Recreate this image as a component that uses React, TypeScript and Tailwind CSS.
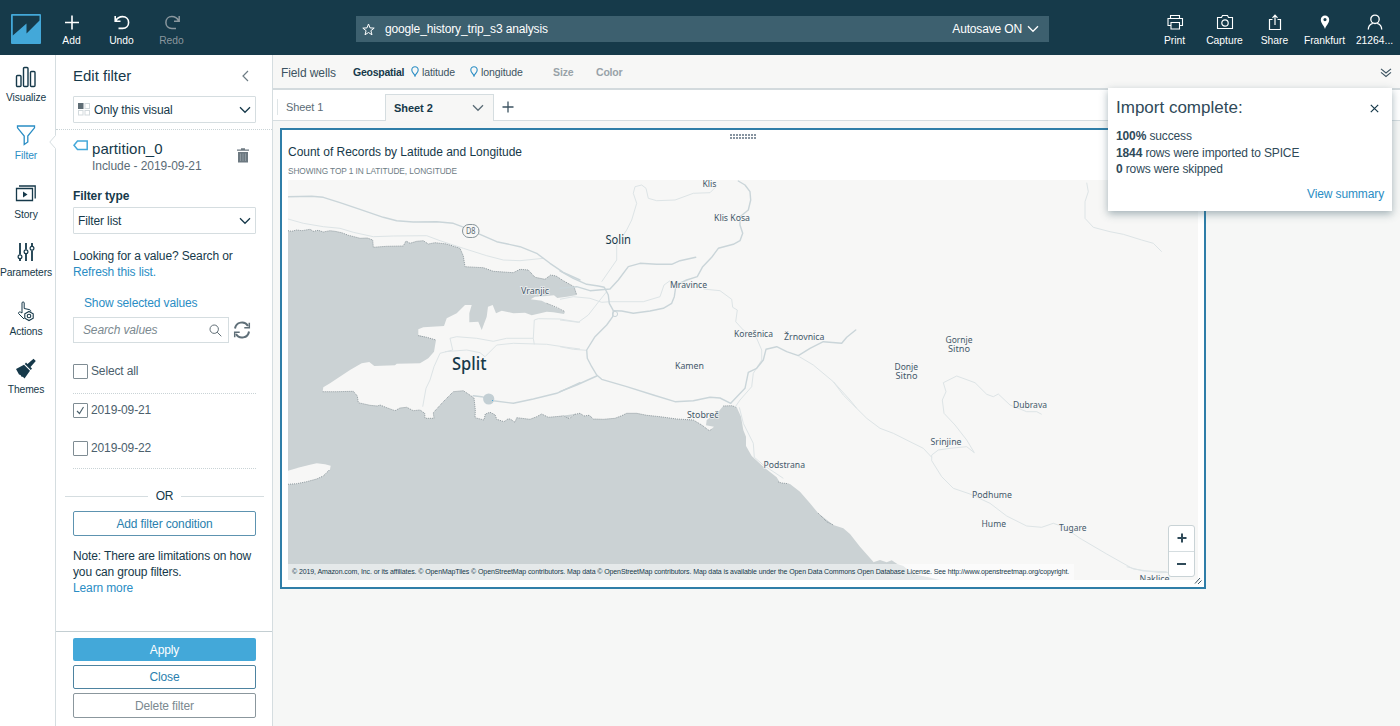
import React from "react";

type Origin = [number, number];

function trace(origin: Origin, coords: string): string {
  return coords
    .trim()
    .split(/\s+/)
    .map((p) => {
      const [x, y] = p.split(",").map(Number);
      return `${(origin[0] + x / 3).toFixed(1)},${(origin[1] + y / 3).toFixed(1)}`;
    })
    .join(" ");
}

const NW: Origin = [280, 170];
const N: Origin = [560, 170];
const NE: Origin = [840, 170];
const SW: Origin = [280, 370];
const S: Origin = [560, 370];
const SE: Origin = [860, 370];

const northShore = trace(
  NW,
  "24,182 35,184 50,180 66,182 90,178 100,184 115,181 130,186 150,182 165,184 185,188 205,196 222,200 240,205 262,204 278,210 280,232 320,229 370,228 378,213 390,220 410,214 430,212 445,222 465,218 500,222 540,235 550,258 555,290 610,293 640,304 700,308 720,298 745,300 765,322 795,328 812,315 828,318 850,332 882,350 890,375",
);
const innerBay = trace(
  NW,
  "860,380 832,384 822,376 800,378 765,380 752,388 785,392 800,400 855,425 852,432 820,427 800,425 755,436 735,428 700,430 665,422 648,430 638,405 624,410 620,440 605,480 595,455 568,457 568,430 575,405 555,405 530,430 500,445 492,468 430,472 415,478 415,495 440,502 468,510 462,545 445,565 420,580 350,581 345,586 283,588 268,576 245,580 210,600 150,640 130,652 128,663",
);
const peninsula = trace(
  SW,
  "128,65 170,65 220,64 232,78 235,98 270,106 292,108 300,105 320,113 345,122 360,114 380,112 400,122 420,120 434,130 435,145 462,145 460,128 490,95 520,65 550,62 565,72 582,84 586,120 585,143 612,150 616,132 630,127 645,134 650,148 672,155 685,146 692,148 705,157 710,143 750,148 770,140 785,132 805,142 850,138 868,146 885,132",
);
const southShore = trace(
  S,
  "0,138 12,140 25,145 40,135 60,130 72,138 88,136 100,147 130,148 165,145 185,137 200,130 230,130 260,136 300,140 350,147 400,150 425,165 448,182 462,170 438,166 440,150 475,125 490,108 515,107 530,112 543,140 550,180 558,200 558,228 575,258 610,290 650,322 660,338 690,342 720,365 750,400 775,430 820,465 850,475 870,492 900,530 940,575",
);
const southEast = trace(SE, "40,577 60,570 80,577 95,571 112,582 130,588 160,612 205,622 240,630");

const island = trace(SW, "20,303 60,292 90,284 110,280 135,283 152,287 150,298 130,318 110,327 80,335 50,341 20,343");

const mainRoads = [
  trace(NW, "24,80 95,79 130,82 180,98 240,118 310,142 350,152 400,156 470,155 520,160 560,175 600,193 650,215 720,230 770,250 810,280 850,307 900,330"),
  trace(N, "0,303 40,325 80,343 115,348 133,352 145,375 148,400 160,422 158,440 140,465 105,500 80,540 82,565 95,590 110,615 125,628 200,650 280,675 345,695 400,692 450,682 480,684 512,700"),
  trace(N, "535,33 555,45 570,65 572,90 565,120 540,140 540,165 548,190 540,212 520,223 475,235 455,262 428,290 412,320 380,330 348,345 343,380 335,400 310,415 270,423 220,430 185,423 160,422"),
  trace(N, "0,355 50,350 90,362 150,357 175,330 205,290 240,280 290,283 335,283 360,272 407,262"),
  trace(N, "512,700 555,655 565,607 590,595 610,570 618,538 650,530 680,545 715,557 750,535 790,515 845,520 860,502 887,480"),
  trace(N, "0,665 50,645 110,618"),
  trace(NW, "580,677 605,680 640,692 700,700 760,687 830,670 900,638"),
];

const minorRoads = [
  trace(NW, "24,147 70,160 130,170 180,175 220,187 280,200 340,198 440,197 480,212 550,235 620,257 670,270 720,272 790,265"),
  trace(NW, "510,505 530,500 590,505 640,514 680,505 760,505 763,450 775,446 840,447 900,457"),
  trace(NW, "510,505 518,540 480,550 462,590 450,630 438,655 428,710"),
  trace(NW, "495,545 560,540 600,548 615,560 650,525 700,520 800,523 860,532 900,537"),
  trace(NW, "760,505 763,523"),
  trace(N, "0,530 40,538 80,541"),
  trace(N, "150,395 250,395 300,380 312,345 330,332"),
  trace(N, "0,450 55,457 85,435 120,390 140,365"),
  trace(N, "0,388 40,380 90,385 125,397 150,395"),
  trace(N, "125,335 170,270 170,225 200,180 215,150 230,100 220,70 225,50 245,45 258,55 265,85 290,92 345,90 400,70 450,68 468,50"),
  trace(N, "430,357 480,362 515,388 518,412 532,420 527,455 550,480 590,505 605,540 605,570 580,610 575,650 540,690 525,712"),
  trace(N, "718,560 760,585 820,635 870,690 890,715"),
  trace(S, "820,35 850,75 920,145 960,175 1000,190 1050,215 1090,235 1115,262"),
  trace(NE, "740,38 745,65 735,95 735,145 760,172 810,185 850,193 905,210 940,220 965,245"),
  trace(SE, "380,73 345,38 290,18 250,38 258,65 247,90 252,130 285,165 320,210 343,248 320,230 270,235 235,240 215,255 215,272 245,320 280,355 330,372 390,400 440,438 500,468 545,472 580,460 610,470 660,505 740,552 820,597 900,608 980,605"),
  trace(SE, "380,73 400,80 415,72 450,105 500,125 530,125 545,133"),
  trace(SE, "800,590 850,603 920,605"),
  trace(S, "538,112 550,160 580,220 583,262 610,285 670,325"),
];

interface PlaceLabel {
  text: string;
  x: number;
  y: number;
  w: number;
  size?: number;
  weight?: number;
  fill?: string;
}

const places: PlaceLabel[] = [
  { text: "Klis", x: 702.5, y: 187, w: 14 },
  { text: "Klis Kosa", x: 714, y: 221, w: 36 },
  { text: "Solin", x: 605.5, y: 243.5, w: 25.5, size: 12, fill: "#16394a" },
  { text: "Mravince", x: 670, y: 287.5, w: 37 },
  { text: "Vranjic", x: 521, y: 294, w: 28 },
  { text: "Korešnica", x: 734, y: 336.5, w: 39 },
  { text: "Žrnovnica", x: 784, y: 340, w: 40.5 },
  { text: "Kamen", x: 675, y: 368.5, w: 29 },
  { text: "Split", x: 452, y: 370, w: 34.5, size: 18, weight: 500, fill: "#16394a" },
  { text: "Gornje", x: 945.5, y: 342.7, w: 27 },
  { text: "Sitno", x: 948, y: 352, w: 22 },
  { text: "Donje", x: 894.5, y: 369.7, w: 23.5 },
  { text: "Sitno", x: 895.5, y: 379, w: 22 },
  { text: "Dubrava", x: 1013, y: 407.5, w: 34 },
  { text: "Stobreč", x: 687, y: 417.5, w: 31.5 },
  { text: "Srinjine", x: 930.5, y: 445, w: 31 },
  { text: "Podstrana", x: 763.5, y: 468, w: 41.5 },
  { text: "Podhume", x: 972, y: 497.5, w: 40 },
  { text: "Hume", x: 981.5, y: 526.5, w: 24.5 },
  { text: "Tugare", x: 1059, y: 530.5, w: 27.5 },
  { text: "Naklice", x: 1139.5, y: 582, w: 30 },
];

function MapView() {
  return (
    <svg className="block h-[400px] w-[910px]" viewBox="288 180 910 400">
      <rect x="288" y="180" width="910" height="400" fill="#f7f7f6" />
      <polygon points={`${northShore} ${innerBay} ${peninsula} ${southShore} ${southEast} 288,580`} fill="#cbd2d4" />
      <polygon points={island} fill="#f7f7f6" />
      <g fill="none" stroke="#8e999e" strokeWidth="1" strokeDasharray="1 1">
        <polyline points={northShore} />
        <polyline points={peninsula} />
        <polyline points={trace(S, "45,133 60,130 72,138 88,136 100,147 130,148 165,145 185,137 200,130 230,130 260,136 300,140 350,147 400,150 425,165 448,182 455,178")} />
        <polyline points={trace(S, "490,108 515,107 530,112")} />
        <polyline points={trace(S, "775,430 800,455 820,465")} />
        <polyline points={trace(S, "655,336 665,339 685,341")} />
        <polyline points={trace(SW, "24,343 50,341 80,335 110,327 130,318 150,298")} />
        <polyline points={trace(NW, "415,497 440,502 468,510")} />
        <polyline points={trace(NW, "800,400 830,412 855,425")} />
      </g>
      <g fill="none" stroke="#dde4e6" strokeWidth="1" strokeLinejoin="round">
        {minorRoads.map((p, i) => (
          <polyline key={i} points={p} />
        ))}
      </g>
      <g fill="none" stroke="#cad5d9" strokeWidth="1.4" strokeLinejoin="round" strokeLinecap="round">
        {mainRoads.map((p, i) => (
          <polyline key={i} points={p} />
        ))}
      </g>
      <circle cx="615" cy="314" r="2.6" fill="none" stroke="#cad5d9" />
      <circle cx="488.7" cy="399" r="5.6" fill="#c3cfd4" />
      <rect x="492" y="400" width="1" height="1" fill="#43a8d9" />
      <rect x="462.5" y="224.5" width="16.5" height="13" rx="6.5" fill="#f7f7f6" stroke="#87949a" />
      <text x="466" y="234" fontSize="8.5" fontFamily="'Noto Sans', sans-serif" fill="#5b6a72" textLength="9.5" lengthAdjust="spacingAndGlyphs">
        D8
      </text>
      {places.map((p) => (
        <text
          key={`${p.text}${p.x}`}
          x={p.x}
          y={p.y}
          fontSize={p.size ?? 9}
          fontWeight={p.weight ?? 400}
          fontFamily="'Noto Sans', sans-serif"
          fill={p.fill ?? "#44596a"}
          stroke="#f7f7f6"
          strokeWidth="1.6"
          strokeOpacity="0.8"
          paintOrder="stroke"
          textLength={p.w}
          lengthAdjust="spacingAndGlyphs"
        >
          {p.text}
        </text>
      ))}
    </svg>
  );
}

function Glyph({ children, size = 20, sw = 1.4, className = "" }: { children: React.ReactNode; size?: number; sw?: number; className?: string }) {
  return (
    <svg
      width={size}
      height={size}
      viewBox={`0 0 ${size} ${size}`}
      fill="none"
      stroke="currentColor"
      strokeWidth={sw}
      className={`shrink-0 ${className}`}
    >
      {children}
    </svg>
  );
}

function Chevron({ className = "" }: { className?: string }) {
  return (
    <svg width="12" height="8" viewBox="0 0 12 8" fill="none" stroke="currentColor" strokeWidth="1.3" className={className}>
      <path d="M1 1.3L6 6.3L11 1.3" />
    </svg>
  );
}

function TopAction({ label, dim, children }: { label: string; dim?: boolean; children: React.ReactNode }) {
  return (
    <div className={`flex w-[50px] flex-col items-center pt-3 ${dim ? "text-[#8a979e]" : "text-white"}`}>
      <Glyph>{children}</Glyph>
      <span className="mt-px text-[10.3px] leading-4 whitespace-nowrap">{label}</span>
    </div>
  );
}

function TopBar() {
  return (
    <header className="flex h-[55px] shrink-0 bg-[#163a4a]">
      <div className="flex w-[46.500px] pt-3.5 pl-[11px]">
        <svg width="30" height="30" viewBox="0 0 30 30">
          <rect width="30" height="30" rx="1" fill="#43a8d9" />
          <path d="M1.8 1.8H28.5V6.5L15.500 19.500V9.500L1.8 21.5Z" fill="#163a4a" />
        </svg>
      </div>
      <TopAction label="Add">
        <path d="M10 3.5V17.5M3 10.5H17" strokeWidth="1.6" />
      </TopAction>
      <TopAction label="Undo">
        <path d="M3.200 4V9.200H8.500M3.800 8.800C5.400 5.600 7.800 4.600 10.600 4.600C14.200 4.600 16.600 7 16.600 10.500C16.600 14 14.200 16.400 10.600 16.400H6.500" strokeWidth="1.6" />
      </TopAction>
      <TopAction label="Redo" dim>
        <path d="M17.200 4V9.200H12M16.700 8.800C15 5.600 12.600 4.600 9.800 4.600C6.300 4.600 3.900 7 3.900 10.500C3.900 14 6.300 16.400 9.800 16.400H14" strokeWidth="1.5" />
      </TopAction>
      <div className="mt-4 ml-[159.500px] flex h-[26px] w-[693px] items-center bg-[#3d606f] px-[6px] text-white">
        <svg width="13" height="13" viewBox="0 0 13 13" fill="none" stroke="currentColor" strokeWidth="1">
          <path d="M6.500 1L8 4.900L12.200 5.100L8.900 7.700L10 11.800L6.500 9.500L3 11.800L4.100 7.700L.8 5.100L5 4.900Z" />
        </svg>
        <span className="ml-[10px] text-[12px] tracking-[-0.150px]">google_history_trip_s3 analysis</span>
        <span className="ml-auto text-[12px] tracking-[-0.150px]">Autosave ON</span>
        <Chevron className="mr-1 ml-[5px]" />
      </div>
      <div className="mr-[0.500px] ml-auto flex">
        <TopAction label="Print">
          <path d="M5.500 6.500V3.500H14.500V6.500M5.500 13.500H3V6.500H17.500V13.500H14.500M6 10.500H14.500V17H6Z" strokeWidth="1.1" />
        </TopAction>
        <TopAction label="Capture">
          <path d="M2.500 5.500H6.500L7.500 3.500H12.500L13.500 5.500H17.500V16.500H2.500Z" strokeWidth="1.1" />
          <circle cx="10" cy="11" r="3.200" strokeWidth="1.200" />
        </TopAction>
        <TopAction label="Share">
          <path d="M7.500 7.500H4.500V17.500H15.500V7.500H12.500M10 13V3.500M7.500 5.800L10 3.200L12.500 5.800" strokeWidth="1.200" />
        </TopAction>
        <TopAction label="Frankfurt">
          <path d="M10 17C9 13.500 5.800 11.500 5.800 7.800A4.200 4.200 0 0 1 14.200 7.800C14.200 11.500 11 13.500 10 17ZM10 6A1.600 1.600 0 1 0 10 9.200A1.600 1.600 0 1 0 10 6Z" fill="currentColor" stroke="none" fillRule="evenodd" />
        </TopAction>
        <TopAction label="21264...">
          <circle cx="10" cy="7.300" r="4.200" strokeWidth="1.300" />
          <path d="M3.300 17.500C3.300 14 5.500 12 7.800 11.300M12.200 11.300C14.500 12 16.700 14 16.700 17.500" strokeWidth="1.300" />
        </TopAction>
      </div>
    </header>
  );
}

function NavItem({ label, active, children }: { label: string; active?: boolean; children: React.ReactNode }) {
  return (
    <div className={`flex h-[58.4px] w-[52px] flex-col items-center ${active ? "text-[#2a8dc4]" : "text-[#16394a]"}`}>
      <div className="mt-[11px] flex h-[22px] items-center">
        <Glyph size={22}>{children}</Glyph>
      </div>
      <span className="mt-[2px] text-[10.300px] leading-4 tracking-[-0.100px] whitespace-nowrap">{label}</span>
    </div>
  );
}

function SideNav() {
  return (
    <nav className="relative w-14 shrink-0 border-r border-[#d5dde0]">
      <NavItem label="Visualize">
        <rect x="1.500" y="9.500" width="4.500" height="11" rx="1" />
        <rect x="8.500" y="1.500" width="4.500" height="19" rx="1" />
        <rect x="15.500" y="5.500" width="4.500" height="15" rx="1" />
      </NavItem>
      <NavItem label="Filter" active>
        <path d="M2.500 2H19.500V3.800L12.800 12V18L9.200 20.500V12L2.500 3.800Z" strokeWidth="1.300" />
      </NavItem>
      <NavItem label="Story">
        <path d="M1.500 5.500H17.500V17.500H1.500ZM4 3H20.200V15.500" strokeWidth="1.300" />
        <path d="M8 8.500V14.500L12.500 11.500Z" fill="currentColor" stroke="none" />
      </NavItem>
      <NavItem label="Parameters">
        <path d="M5 2V13.500M5 18V20M11 2V8.500M11 13V20M17 2V5M17 9.500V20" strokeWidth="1.800" />
        <circle cx="5" cy="15.700" r="1.900" strokeWidth="1.200" />
        <circle cx="11" cy="10.700" r="1.900" strokeWidth="1.200" />
        <circle cx="17" cy="7.200" r="1.900" strokeWidth="1.200" />
      </NavItem>
      <NavItem label="Actions">
        <path d="M9 19L3.500 13.500C3.500 11.500 5 11.500 7 13V3C7 1.500 9.200 1.500 9.200 3V8.500L14 9.500C15.500 10 15.800 10.500 15.800 11.500" strokeWidth="1" />
        <path d="M14 11.500L18.200 13.800V18.200L14 20.500L9.800 18.200V13.800Z" strokeWidth="1.100" />
        <circle cx="14" cy="16" r="1.800" strokeWidth="1.100" />
      </NavItem>
      <NavItem label="Themes">
        <path d="M12.500 6L18.500 .8L20.800 3L15.500 9L17 10.500L15.800 12L9.800 6L11 4.600Z" fill="currentColor" stroke="none" />
        <path d="M9 6.800L15 12.800L9.500 20.500L7.800 18.800L6.800 19L5.500 17L4 16.500L1 11Z" fill="currentColor" stroke="none" />
      </NavItem>
      <svg className="absolute top-[79px] left-[49px]" width="8" height="16" viewBox="0 0 8 16">
        <path d="M8 0V16L6.500 14.500L.8 8L6.500 1.500Z" fill="#fff" />
        <path d="M6.500 1.500L.8 8L6.500 14.500" fill="none" stroke="#d5dde0" />
      </svg>
    </nav>
  );
}

function SelectBox({ children }: { children: React.ReactNode }) {
  return (
    <div className="flex h-[27px] items-center rounded-[1px] border border-[#d5dde0] pr-1 pl-[4px]">
      {children}
      <Chevron className="ml-auto" />
    </div>
  );
}

function CheckRow({ label, checked }: { label: string; checked?: boolean }) {
  return (
    <div className="flex h-4 items-center text-[#4b606c]">
      <span className="flex size-[15px] items-center justify-center rounded-[1px] border border-[#7f8c93]">
        {checked && (
          <svg width="9" height="9" viewBox="0 0 9 9" fill="none" stroke="currentColor" strokeWidth="1.100">
            <path d="M1 5L3.500 7.500L7.500 1" />
          </svg>
        )}
      </span>
      <span className="ml-[3px]">{label}</span>
    </div>
  );
}

function FilterPanel() {
  return (
    <aside className="flex w-[217px] shrink-0 flex-col border-r border-[#d5dde0] text-[12px] tracking-[-0.130px] text-[#16394a]">
      <div className="border-b border-dotted border-[#c9d3d6] pr-4 pb-[6px] pl-[17px]">
        <div className="mt-[11px] flex h-5 items-center justify-between">
          <h1 className="text-[15px] tracking-normal">Edit filter</h1>
          <svg className="mr-[7px]" width="7" height="12" viewBox="0 0 7 12" fill="none" stroke="#6d7c84" strokeWidth="1.200">
            <path d="M6 1L1 6L6 11" />
          </svg>
        </div>
        <div className="mt-[10px]">
          <SelectBox>
            <svg width="12" height="13" viewBox="0 0 12 13" fill="none" stroke="#d3dadd">
              <rect x="0" y="0" width="5.500" height="6" fill="#5f6d75" stroke="none" />
              <rect x="7" y=".5" width="4.500" height="5" />
              <rect x=".5" y="7.500" width="4.500" height="4.500" />
              <rect x="7" y="7.500" width="4.500" height="4.500" />
            </svg>
            <span className="ml-1">Only this visual</span>
          </SelectBox>
        </div>
      </div>
      <div className="flex flex-1 flex-col pr-4 pl-[17px]">
        <div className="mt-[9px] flex h-9">
          <svg width="15" height="11" viewBox="0 0 15 11" fill="none" stroke="#43a8d9" strokeWidth="1.500" className="mt-[1px]">
            <path d="M14.200 1V9.500H4.500L1 5.200L4.500 1Z" />
          </svg>
          <div className="ml-1">
            <div className="text-[15px] leading-[19px] tracking-[0.050px]">partition_0</div>
            <div className="text-[12px] leading-[17px] tracking-[-0.060px] text-[#5b6c76]">Include - 2019-09-21</div>
          </div>
          <svg width="12" height="15" viewBox="0 0 12 15" className="mt-[9px] mr-[7px] ml-auto" fill="#6d7981">
            <path d="M0 1.500H4V.3H8V1.500H12V2.700H0ZM1 4H11V14.500H1Z" />
            <path d="M3.500 5.500V13M6 5.500V13M8.500 5.500V13" stroke="#98a2a8" strokeWidth=".8" />
          </svg>
        </div>
        <div className="mt-[13px] h-4 text-[12px] leading-4 font-bold tracking-[-0.100px]">Filter type</div>
        <div className="mt-[3px]">
          <SelectBox>Filter list</SelectBox>
        </div>
        <p className="mt-[14px] leading-4 whitespace-nowrap">
          Looking for a value? Search or
          <br />
          <a className="text-[#2a8dc4]">Refresh this list.</a>
        </p>
        <a className="mt-[15px] ml-[11px] leading-4 text-[#2a8dc4]">Show selected values</a>
        <div className="mt-[6px] flex h-[26px] items-center">
          <div className="flex h-[26px] w-[156px] items-center border border-[#d5dde0] pr-[6px] pl-[9px] text-[#7b8990] italic">
            Search values
            <svg className="ml-auto" width="13" height="13" viewBox="0 0 13 13" fill="none" stroke="#5f6d75" strokeWidth="1">
              <circle cx="5.200" cy="5.200" r="4.200" />
              <path d="M8.200 8.200L12.300 12.300" />
            </svg>
          </div>
          <svg className="ml-[4px]" width="18" height="18" viewBox="0 0 18 18" fill="none" stroke="#5f6f78" strokeWidth="2">
            <path d="M2 7.500A7 7 0 0 1 15 5M16 10.500A7 7 0 0 1 3 13" />
            <path d="M16.300 1.800V6.800H11.300M1.700 16.200V11.200H6.700" strokeWidth="1.500" />
          </svg>
        </div>
        <div className="mt-5">
          <CheckRow label="Select all" />
        </div>
        <div className="mt-[14px] border-t border-dotted border-[#c9d3d6]" />
        <div className="mt-2">
          <CheckRow label="2019-09-21" checked />
        </div>
        <div className="mt-[22px]">
          <CheckRow label="2019-09-22" />
        </div>
        <div className="mt-[12px] border-t border-dotted border-[#c9d3d6]" />
        <div className="-mx-2 mt-[19px] flex h-4 items-center gap-2">
          <span className="h-px flex-1 bg-[#d5dde0]" />
          <span className="text-[12px] tracking-[-0.300px]">OR</span>
          <span className="h-px flex-1 bg-[#d5dde0]" />
        </div>
        <button className="mt-[7px] h-[25px] rounded-[2px] border border-[#5d93b0] text-[#2a7fae]">Add filter condition</button>
        <p className="mt-3 leading-4 whitespace-nowrap">
          Note: There are limitations on how
          <br />
          you can group filters.
          <br />
          <a className="text-[#2a8dc4]">Learn more</a>
        </p>
      </div>
      <div className="flex h-[95px] flex-col border-t border-[#c3ced2] pt-[6px] pr-4 pl-[17px]">
        <button className="h-[23px] rounded-[2px] bg-[#43a8d9] text-white">Apply</button>
        <button className="mt-1 h-[24px] rounded-[2px] border border-[#4d83a0] text-[#2a7fae]">Close</button>
        <button className="mt-1 h-[25px] rounded-[2px] border border-[#8b979d] text-[#7b8990]">Delete filter</button>
      </div>
    </aside>
  );
}

function Pin() {
  return (
    <svg width="8" height="11" viewBox="0 0 8 11" fill="none" stroke="#2a8dc4" strokeWidth="1.100" className="mb-[3px]">
      <path d="M4 10C3.200 7.500 .8 6.500 .8 3.900A3.200 3.200 0 0 1 7.200 3.900C7.200 6.500 4.800 7.500 4 10Z" />
    </svg>
  );
}

function FieldWells() {
  return (
    <div className="flex h-[35px] items-center border-b-2 border-[#d3dadd] bg-[#f7f7f6] pt-[2px] pl-2 text-[10.500px] whitespace-nowrap text-[#3c5361]">
      <span className="w-[72px] text-[12px] tracking-[-0.100px]">Field wells</span>
      <span className="w-[58px] font-bold tracking-[-0.250px] text-[#16394a]">Geospatial</span>
      <Pin />
      <span className="ml-[3px] w-12 tracking-[-0.100px]">latitude</span>
      <Pin />
      <span className="ml-[3px] w-[72px] tracking-[-0.100px]">longitude</span>
      <span className="w-[43px] font-bold tracking-[-0.100px] text-[#98a2a8]">Size</span>
      <span className="font-bold tracking-[-0.200px] text-[#98a2a8]">Color</span>
      <svg className="mr-2 ml-auto" width="12" height="10" viewBox="0 0 12 10" fill="none" stroke="#3c5361" strokeWidth="1.100">
        <path d="M1 .8L6 5L11 .8M1 4.300L6 8.500L11 4.300" />
      </svg>
    </div>
  );
}

function SheetTabs() {
  return (
    <div className="flex h-[31px] border-b border-[#d5dde0] bg-white text-[11px] text-[#5b6c76]">
      <div className="mt-[9px] ml-1 h-4 w-px bg-[#dfe5e7]" />
      <div className="flex w-[107px] items-center pt-1 pl-2 tracking-[-0.100px]">Sheet 1</div>
      <div className="mt-1 -mb-px flex w-[109px] items-center border-x border-t border-[#d5dde0] bg-[#f7f7f6] pr-[9px] pl-2">
        <span className="font-bold tracking-[-0.050px] text-[#16394a]">Sheet 2</span>
        <Chevron className="ml-auto" />
      </div>
      <svg className="mt-[11px] ml-2" width="12" height="12" viewBox="0 0 12 12" stroke="#3c5361" strokeWidth="1.300">
        <path d="M6 .5V11.500M.5 6H11.500" />
      </svg>
    </div>
  );
}

function VisualCard() {
  return (
    <section className="relative mt-[7px] ml-[7px] h-[461px] w-[926px] border-2 border-[#2f7ea8] bg-white">
      <div className="mx-auto mt-[4px] grid h-[5px] w-[26px] grid-cols-9 gap-px">
        {Array.from({ length: 18 }, (_, i) => (
          <span key={i} className="size-[2px] bg-[#8794a0]" />
        ))}
      </div>
      <h2 className="mt-[5px] ml-[6px] h-4 text-[12px] leading-4 tracking-[-0.020px] text-[#16394a]">Count of Records by Latitude and Longitude</h2>
      <div className="mt-[5px] ml-[6px] h-3 text-[8.300px] leading-3 tracking-[-0.080px] text-[#6d7c84]">SHOWING TOP 1 IN LATITUDE, LONGITUDE</div>
      <div className="relative mt-[3px] ml-[6px] h-[400px] w-[910px] overflow-hidden">
        <MapView />
        <div className="absolute bottom-0 left-0 flex h-4 w-[786px] items-center bg-white/50 pt-px pl-1 text-[7px] tracking-[-0.100px] whitespace-nowrap text-[#16394a]">
          © 2019, Amazon.com, Inc. or its affiliates. © OpenMapTiles © OpenStreetMap contributors. Map data © OpenStreetMap contributors. Map data is available under the Open Data Commons Open Database License. See http://www.openstreetmap.org/copyright.
        </div>
        <div className="absolute right-[3px] bottom-[3px] flex h-[52px] w-[27px] flex-col rounded-[3px] border border-[#c9d3d6] bg-white text-[#2f4a59]">
          <div className="flex flex-1 items-center justify-center border-b border-[#d5dde0]">
            <svg width="10" height="10" viewBox="0 0 10 10" stroke="currentColor" strokeWidth="2">
              <path d="M5 .5V9.500M.5 5H9.500" />
            </svg>
          </div>
          <div className="flex flex-1 items-center justify-center">
            <span className="h-[2px] w-[9px] bg-current" />
          </div>
        </div>
      </div>
      <svg className="absolute right-[2px] bottom-[2px]" width="8" height="8" viewBox="0 0 8 8" stroke="#3c5361" strokeWidth="1">
        <path d="M1 6.500L6 1M4 7L7.500 3.500" />
      </svg>
    </section>
  );
}

function ImportToast() {
  return (
    <div className="absolute top-[88px] right-2 h-[123px] w-[284px] bg-white px-2 text-[12px] tracking-[-0.130px] text-[#16394a] shadow-[0_3px_8px_rgba(60,90,105,0.45)]">
      <div className="mt-[10px] flex h-5 items-center justify-between text-[17px] tracking-normal text-[#2f4a59]">
        Import complete:
        <svg className="mr-[5px]" width="9" height="9" viewBox="0 0 9 9" stroke="#16394a" strokeWidth="1.200">
          <path d="M.8 .8L8.200 8.200M8.200 .8L.8 8.200" />
        </svg>
      </div>
      <div className="mt-[10px] leading-[16.700px] text-[#2f4a59]">
        <b>100%</b> success
        <br />
        <b>1844</b> rows were imported to SPICE
        <br />
        <b>0</b> rows were skipped
      </div>
      <a className="mt-2 block text-right leading-4 text-[#2a8dc4]">View summary</a>
    </div>
  );
}

export default function App() {
  return (
    <div className="relative flex h-[726px] w-[1400px] flex-col overflow-hidden bg-white font-['Liberation_Sans',Arial,sans-serif]">
      <TopBar />
      <div className="flex min-h-0 flex-1">
        <SideNav />
        <FilterPanel />
        <main className="min-w-0 flex-1 bg-[#f6f7f6]">
          <FieldWells />
          <SheetTabs />
          <VisualCard />
        </main>
      </div>
      <ImportToast />
    </div>
  );
}
